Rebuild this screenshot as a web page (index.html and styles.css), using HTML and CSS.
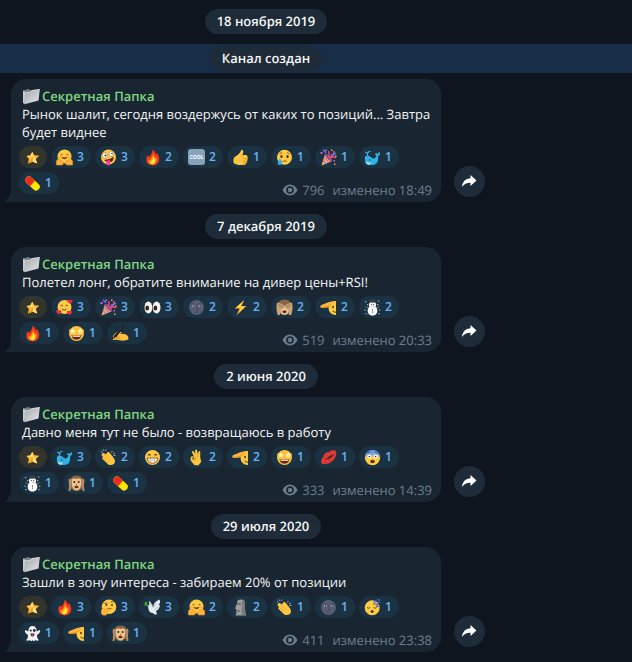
FILE: index.html
```html
<!DOCTYPE html>
<html lang="ru">
<head>
<meta charset="utf-8">
<meta name="viewport" content="width=device-width, initial-scale=1">
<title>Секретная Папка</title>
<link rel="stylesheet" href="styles.css">
</head>
<body>
<svg class="sprite" aria-hidden="true">
  <defs>
    <linearGradient id="g-folder" x1="0" y1="0" x2="1" y2="1"><stop offset="0" stop-color="#a2a6ab"/><stop offset="1" stop-color="#e6e8ea"/></linearGradient>
    <linearGradient id="g-fear" x1="0" y1="0" x2="0" y2="1"><stop offset="0" stop-color="#5a86e0"/><stop offset=".3" stop-color="#8aa9dc"/><stop offset=".55" stop-color="#ffcb45"/></linearGradient>
    <clipPath id="c-half"><path d="M0 0h16v17H0z"/></clipPath>
  </defs>
  <symbol id="folder" viewBox="0 0 18 17"><path d="M1 2.500L7 1l1 1.200L17.500 1v2L2 16z" fill="#7d8287"/><path d="M1 2.500V15l1.500 1L3.500 4z" fill="#c9ccd0"/><path d="M3 5l5-.7L9.500 2.800 17.800 1.500 16.500 12.500 2.500 16.300z" fill="url(#g-folder)"/><path d="M3 5l5-.7L9.500 2.800l8.300-1.300" fill="none" stroke="#f0f1f2" stroke-width=".7"/></symbol>
  <symbol id="star" viewBox="0 0 17 17"><path d="M8.300 2.800l2 3.500 5 .4-3.500 3.300 1.500 4.500-4.600-1.800L4 14.600l.9-4.600L2.400 7l3.900-.4z" fill="#ffbf35"/><path d="M8.300 2.800l.6 5.200-6.500-1 3.900-.4zM8.900 8l2.100 1.400 2.300 5.100-4.600-1.800z" fill="#ffdf8a"/><path d="M4 14.600L8.900 8l-.2 4.700z" fill="#f79a1d"/></symbol>
  <symbol id="hug" viewBox="0 0 17 17"><circle cx="8.500" cy="7.500" r="7" fill="#ffcb45"/><path d="M4.500 6q1-1.300 2 0M10.500 6q1-1.300 2 0" fill="none" stroke="#6a3b12" stroke-width="1"/><path d="M5.500 8.200q3 3.400 6 0" fill="#8a3d16" stroke="#6a3b12" stroke-width=".6"/><circle cx="3.500" cy="8.300" r="1" fill="#ff9c55"/><circle cx="13.500" cy="8.300" r="1" fill="#ff9c55"/><path d="M.5 16q-1-4 1-5.500Q3 9.500 4 11l3 1.500q1 1.500-.5 3.500zM16.500 16q1-4-1-5.500-1.500-1-2.500.5l-3 1.500q-1 1.500.5 3.500z" fill="#ffb13b" stroke="#e08723" stroke-width=".6"/></symbol>
  <symbol id="zany" viewBox="0 0 17 17"><circle cx="8.500" cy="8" r="7.500" fill="#ffcb45"/><circle cx="5" cy="6.500" r="2.700" fill="#fff" stroke="#8b5a24" stroke-width=".5"/><circle cx="11.500" cy="4.800" r="2.500" fill="#fff" stroke="#8b5a24" stroke-width=".5"/><circle cx="5.500" cy="6.500" r="1" fill="#3a2412"/><circle cx="12" cy="4.500" r=".8" fill="#3a2412"/><path d="M4 10.800q5 .5 9.500-3 .6 5-3.900 5.700-4 .3-5.600-2.700z" fill="#6b1f16"/><path d="M6 12l4-1q1 5.500-1.500 5.500-2.500 0-2.500-4.500z" fill="#f2459a"/></symbol>
  <symbol id="fire" viewBox="0 0 17 17"><path d="M8.500.5q3 2.500 3.500 5l1-1.500q3 4 2 8-1.200 4-6 4.500-6-.2-6.700-5-.2-3 1.700-5.500l1 2Q8.500 4.500 8.500.5z" fill="#f2381c"/><path d="M9 4q.5 3 2.500 5l1-1q1 7-4 7.500-4.500-.5-4-5l1.500.8Q9 8 9 4z" fill="#ff9a1a"/><path d="M9 8q3 3 2 5.500-1 2-3 1.800-2.300-.8-2-3.300l1.200.5Q9 11 9 8z" fill="#ffe53c"/></symbol>
  <symbol id="thumb" viewBox="0 0 17 17"><path d="M9.500.8q2 0 1.800 2.200L10.500 6H14q1.500.2 1.400 1.600.8 1 0 2.200.6 1.200-.3 2.200.3 1.400-.8 2-.3 2-2.300 2H6.500L2 14.500Q.500 11 2.500 8q3.500-1.500 5.500-4.500z" fill="#ffc540"/><path d="M15.400 9.800h-4M15 12.100h-4M14.300 14.200h-3.500M10.500 6L9.800 8" fill="none" stroke="#e58e20" stroke-width=".8"/></symbol>
  <symbol id="cry" viewBox="0 0 17 17"><circle cx="8.500" cy="8.300" r="7.500" fill="#ffcb45"/><ellipse cx="5.500" cy="7.500" rx="1.200" ry="1.600" fill="#55341a"/><ellipse cx="11.500" cy="7.500" rx="1.200" ry="1.600" fill="#55341a"/><path d="M3.500 5l2.500-1.500M13.500 5L11 3.500M6.500 12.500q2-1.500 4.200 0" fill="none" stroke="#7b4a1c" stroke-width=".9"/><path d="M4 9.500q3.500 5 .8 6.300Q2 16.800 1.700 14 1.800 12 4 9.500z" fill="#3fa7ee"/></symbol>
  <symbol id="party" viewBox="0 0 17 17"><path d="M5 5l7 7L1.500 16.500z" fill="#f7b844"/><path d="M4 8.500l5 5M3 11.500l3.200 3.500" stroke="#c06ddb" stroke-width="1.200"/><ellipse cx="8.500" cy="8.500" rx="1.800" ry="4.800" transform="rotate(-45 8.500 8.500)" fill="#a04a8c"/><path d="M8.500 8q1.500-3 0-6M10 8q4-1 4-6M10 9q3-2 6 0" fill="none" stroke="#f04a7c" stroke-width="1.500"/><path d="M6 4Q5 2 3 1M11 6q3 0 5-2" fill="none" stroke="#5580f5" stroke-width="1.500"/><path d="M.5 3h2v2h-2zM13.500 11H15v1.500h-1.500zM5.500.5h1.500V2H5.500z" fill="#d658dc"/><path d="M11 .5h1.500V2H11zM15 6.500h1.500V8H15zM14 14.500h1.500V16H14z" fill="#f5a927"/></symbol>
  <symbol id="whale" viewBox="0 0 17 17"><path d="M.8 9.500Q.8 6 4 6.500 6.500 7 8 9q3 1.500 4.500-2.500L10.500 5l2.300-1 .4 1.200L15.500 3q1.800 2-1.500 4.500.8 4.500-1.500 7-3 2-7 1.500Q.8 15 .8 9.500z" fill="#31b1e4"/><path d="M1 12.500q3 1.500 6 .8-.5 2.200-2.500 2.600Q1.800 15 1 12.500z" fill="#a5def0"/><circle cx="5.800" cy="11" r=".8" fill="#12394f"/><path d="M3.500 6.500Q4 3.500 1 3M3.500 6.500Q3.500 2 6.500 2.500" fill="none" stroke="#43b9ed" stroke-width="1.100"/></symbol>
  <symbol id="pill" viewBox="0 0 17 17"><g transform="rotate(42 8.500 8.500)"><rect x="0" y="4.800" width="17" height="7.400" rx="3.700" fill="#ffe600"/><path d="M8.500 4.800v7.400H3.700a3.700 3.700 0 010-7.400z" fill="#eb2f1d"/></g></symbol>
  <symbol id="love" viewBox="0 0 17 17"><circle cx="8.500" cy="8" r="7" fill="#ffcb45"/><path d="M4.500 7q1.200-1.800 2.400 0M9.500 7q1.200-1.800 2.400 0M6 10q2.300 2.200 4.600 0" fill="none" stroke="#70411a" stroke-width="1"/><path d="M14 4.800Q10.500 3 11.200 1.200 12.500-.2 14 1.500q1.700-1.500 2.700 0Q17 3.500 14 4.800zM3 15.500Q-.5 13.500.3 11.500q1.200-1.300 2.500.3Q4.500 10.500 5.500 12q.3 2-2.500 3.500zM13.500 16q-3-1.800-2.400-3.700 1.200-1.300 2.500.3 1.700-1.300 2.700.2.300 1.800-2.800 3.200z" fill="#f02b43"/></symbol>
  <symbol id="eyes" viewBox="0 0 17 17"><ellipse cx="4.400" cy="8.500" rx="3.900" ry="6" fill="#f6f5f2"/><ellipse cx="12.600" cy="8.500" rx="3.900" ry="6" fill="#f6f5f2"/><ellipse cx="3.200" cy="9" rx="1.900" ry="2.600" fill="#3b2519"/><ellipse cx="11.400" cy="9" rx="1.900" ry="2.600" fill="#3b2519"/></symbol>
  <symbol id="moon" viewBox="0 0 17 17"><circle cx="8.500" cy="8.500" r="7.400" fill="#565d75"/><path d="M9 5l.5 5-1.500.7 1.500.3" fill="none" stroke="#3c435a" stroke-width=".8"/><path d="M4 7h2.800M10.500 7h2.800" stroke="#b4b6c0" stroke-width="1.300"/><path d="M5.200 7h1M11.700 7h1" stroke="#23283a" stroke-width="1.300"/><path d="M3.500 5l3-.5M10.500 4.500l3 .5M6.500 13q2 .8 4 0" fill="none" stroke="#3c435a" stroke-width=".8"/></symbol>
  <symbol id="bolt" viewBox="0 0 17 17"><path d="M12.500.8L2.500 9.500h5L4.500 16.300 14.500 7H9.300z" fill="#ffa51e"/><path d="M11.500 2L4.500 8.700h4.700L6.500 14l6.300-6.200H8z" fill="#ffe04d"/></symbol>
  <symbol id="seeno" viewBox="0 0 17 17"><path d="M3 3q1-2.500 5.500-2.500T14 3q2.500 3 1.500 7-1.500 6-7 6.200Q3 16 1.500 10 .5 6 3 3z" fill="#876443"/><ellipse cx="8.500" cy="11.500" rx="4.500" ry="4.200" fill="#ecc38f"/><path d="M1 3.500q4 .3 7.300 3l-.8 3.200Q4.500 9 4 16H1.800Q-.5 10 1 3.500zM16 3.500q-4 .3-7.300 3l.8 3.200Q12.500 9 13 16h2.200Q17.500 10 16 3.500z" fill="#c9a478"/><path d="M2.500 5.500l5 2M2.500 7.300l4 1.300M14.500 5.500l-5 2M14.500 7.300l-4 1.300" stroke="#8c6a46" stroke-width=".6"/><ellipse cx="8.500" cy="12.700" rx="2" ry="1.200" fill="#4b2416"/></symbol>
  <symbol id="hearno" viewBox="0 0 17 17"><path d="M3 3q1-2.500 5.500-2.500T14 3l1.500 6q-1 7-7 7.200Q2.500 16 1.500 9z" fill="#876443"/><path d="M8.500 4q4.500-2 5 2 0 9-5 9.500-5-.5-5-9.500.5-4 5-2z" fill="#ecc38f"/><circle cx="6.300" cy="7" r="1" fill="#4b2416"/><circle cx="10.700" cy="7" r="1" fill="#4b2416"/><ellipse cx="8.500" cy="12" rx="2" ry="1.200" fill="#5e2b1b"/><path d="M8 9.500h1" stroke="#805739" stroke-width=".8"/><path d="M1 3.500l3 1-.5 6-1 5.500H.5Q1.500 9 .5 7zM16 3.500l-3 1 .5 6 1 5.500h2q-1-7 0-9z" fill="#b28b62"/></symbol>
  <symbol id="salute" viewBox="0 0 17 17"><g clip-path="url(#c-half)"><circle cx="15.500" cy="9" r="7" fill="#ffcb45"/><ellipse cx="13" cy="8" rx=".9" ry="1.300" fill="#5b3819"/><path d="M12.500 12q1.500 1.400 3.500 1.200" fill="none" stroke="#5b3819" stroke-width="1"/></g><path d="M.3 8Q0 6.600 1.500 6L9 3l5-1q2-.1 1.500 1.300L12.500 5l-2 2.500L8 8.500 2 9Q.7 9 .3 8z" fill="#ffb63a"/><path d="M1 8.500L8 7.500l2.500-1.800" fill="none" stroke="#dd8422" stroke-width=".7"/></symbol>
  <symbol id="snowman" viewBox="0 0 17 17"><circle cx="8.500" cy="11.800" r="4.900" fill="#fbfcff"/><circle cx="8.500" cy="5.800" r="3.600" fill="#f1f4f9"/><path d="M6 .5h5l.3 2.500H5.800z" fill="#3a3f4b"/><path d="M5 3.200h7" stroke="#3a3f4b" stroke-width=".9"/><path d="M4 9l-2.500-1.500M13 9l2.500-1.500" stroke="#a66f4b" stroke-width="1"/><circle cx="7.300" cy="5.500" r=".5" fill="#222"/><circle cx="9.700" cy="5.500" r=".5" fill="#222"/><path d="M8.500 6.500l2 .7-2 .5z" fill="#ff7d25"/><circle cx="8.500" cy="10.800" r=".6" fill="#222"/><circle cx="8.500" cy="13" r=".6" fill="#222"/><path d="M1 2h1.300v1.300H1zM3 5h1.300v1.300H3zM.5 10.500h1.300v1.300H.5zM14 1.500h1.300v1.300H14zM13 5h1.300v1.300H13zM15 10.500h1.300v1.300H15zM1.500 14h1.300v1.300H1.500zM14.300 14h1.300v1.300h-1.300z" fill="#6ebbe7"/></symbol>
  <symbol id="starry" viewBox="0 0 17 17"><circle cx="8.500" cy="8.500" r="7.500" fill="#ffc238"/><path d="M4.800 2l1.300 2.700 2.700.2-2 2 .6 2.800-2.600-1.400L2.200 9.700l.6-2.800-2-2 2.700-.2zM12.200 2l1.300 2.700 2.700.2-2 2 .6 2.800-2.600-1.400-2.600 1.400.6-2.800-2-2 2.700-.2z" fill="#fff09b" stroke="#e79a22" stroke-width=".4"/><path d="M3.500 10q5 1 10 0-.5 4.500-5 4.700-4.500-.2-5-4.700z" fill="#6b2716"/><path d="M4.300 10.400q4.200.8 8.400 0l-.4 1.300H4.700z" fill="#fff"/></symbol>
  <symbol id="writing" viewBox="0 0 17 17"><path d="M1 11.500q1-3.500 4.500-4.500l3-.5q1.500.3.8 1.500l-1.500 1Q13 8 16 11l.5 3.500Q13 16 9 15.500l-5-.8-3 .3q-1-1 .8-1.800z" fill="#ffbf3c"/><path d="M4 12.500l4-.8M4 14l4-.3" stroke="#dc8620" stroke-width=".8"/><path d="M10.500.5l2 1.300-7.800 9.700L1 14l1.500-4z" fill="#1a1e24"/><path d="M10 2L4 9.500" stroke="#4c5762" stroke-width=".6"/></symbol>
  <symbol id="clap" viewBox="0 0 17 17"><path d="M2 4.500q1-1.200 2.500 0l1.500 1 .8-1.800q1.500-1.300 3 .3l4 5q2 3 .5 5.500-2.500 2.500-6 1L2.500 10q-1-1.500.5-1.800L1.500 6z" fill="#ffc540"/><path d="M5 6l4.500 4.500M3.500 8.300l4.500 4.200" stroke="#eda02e" stroke-width=".7"/><path d="M1 2.700l1.500.5M3.200.5L4 2M5.800.5v1.300M11.500 3.500l.8-1.500M13 5l1.800-1M13.500 6.500h2" stroke="#b9bdc2" stroke-width=".9"/></symbol>
  <symbol id="grin" viewBox="0 0 17 17"><circle cx="8.500" cy="8.500" r="7.500" fill="#ffcb45"/><path d="M4 6.500q1.300-2.200 2.600 0M10.400 6.500q1.300-2.200 2.600 0" fill="none" stroke="#6a3b12" stroke-width="1.100"/><path d="M3.200 9h10.600q-.2 5-5.300 5.200Q3.400 14 3.200 9z" fill="#fff" stroke="#854b1c" stroke-width=".9"/><path d="M3.500 11.300h10M6.500 9v4.500M10.500 9v4.500" stroke="#b98d62" stroke-width=".5"/></symbol>
  <symbol id="ok" viewBox="0 0 17 17"><path d="M6 7.500L3.800 3q.3-1.500 1.700-.8L7.500 5 7 1.200Q8 0 9 1.300l1 4 .8-3q1.200-.8 1.500.5L12.200 8l1 5-3 3.500-4-.5-3.500-4.500Q1.800 8.500 3.500 7.300z" fill="#ffc540"/><ellipse cx="5.300" cy="9.600" rx="1.100" ry="1.300" fill="#8a5a22"/><path d="M7.300 7.500l.4 3-2 2M9.700 6v2" fill="none" stroke="#df8c22" stroke-width=".7"/></symbol>
  <symbol id="kiss" viewBox="0 0 17 17"><path d="M1.500 14.500Q.5 10 3.500 7.500 4.500 3 8.500 3.200 11.500 0 16 2q1 5.500-3 9.500-5 5-11.500 3z" fill="#e33a35"/><path d="M4 11l3.500-2 2-2L14 5q-1.200 3.500-4.500 4.500-2.500 1-5.500 1.500z" fill="#4a2430"/><path d="M6 5l1 2M10 3l.4 2M5 12.500l1 1.500M9 10.500l1.500 2M3.500 8l1.500 1" stroke="#9c2528" stroke-width=".6"/></symbol>
  <symbol id="fear" viewBox="0 0 17 17"><circle cx="8.500" cy="8.500" r="7.700" fill="url(#g-fear)"/><circle cx="5.400" cy="7.500" r="2" fill="#fff"/><circle cx="11.600" cy="7.500" r="2" fill="#fff"/><circle cx="5.400" cy="7.500" r=".8" fill="#3c2412"/><circle cx="11.600" cy="7.500" r=".8" fill="#3c2412"/><ellipse cx="8.500" cy="12.500" rx="2.300" ry="1.700" fill="#5d3015"/><path d="M3 4.500L6 3M14 4.500L11 3" stroke="#344e80" stroke-width=".9"/></symbol>
  <symbol id="think" viewBox="0 0 17 17"><circle cx="9" cy="7.800" r="7.300" fill="#ffcb45"/><circle cx="6.300" cy="6" r="1" fill="#5b3617"/><circle cx="12" cy="6" r="1" fill="#5b3617"/><path d="M4.500 4.500q1.500-1 3-.2M10.500 3q2-1 3.200.5M7 10q2.500-1 4.500-.2" fill="none" stroke="#74441b" stroke-width=".9"/><path d="M2.500 9q1.500-.5 1.500 1.500l5-.8q1.500.4.500 1.500l-2.500.8q2 2-.5 3.800-3 1.400-5-.8Q.5 12 2.500 9z" fill="#ffb83a" stroke="#e08e20" stroke-width=".5"/></symbol>
  <symbol id="dove" viewBox="0 0 17 17"><path d="M4 7Q5 5 7 6.500L9.500 8Q9 3 15.500.5q1.500 3-1 5.500l1.500.3q-.5 4-4 5.700L13 15q-2.500 1.500-4-1-4 0-4.500-4Z" fill="#e6ebee"/><path d="M5.500 7Q4.500 3.500 5.500 1.500L9 7z" fill="#cfd6db"/><path d="M9.500 8.500l3-4M10 11l4-3" fill="none" stroke="#a6afb7" stroke-width=".7"/><path d="M4.500 7.500L2 5.500 1 3M2 5.500L0 6M2.500 5.500L3 3" fill="none" stroke="#53a63c" stroke-width="1.200"/></symbol>
  <symbol id="moai" viewBox="0 0 17 17"><path d="M5.500 1.500Q8 0 12 1q1.500 4 .8 8l1 7.500H3.500l1-3L4 12l.8-1L3 9.500l1.800-4.500z" fill="#9b9d9a"/><path d="M9.500 2.500q1.700 4 0 8l.5 6h3.800l-1-7.500q.7-4-.8-8z" fill="#777b78"/><path d="M5 4.800h3.500L7.500 6M4.500 12H8" fill="none" stroke="#4b4f4f" stroke-width=".9"/></symbol>
  <symbol id="sleep" viewBox="0 0 17 17"><circle cx="8.200" cy="8.800" r="7.500" fill="#ffcb45"/><path d="M3 8.500q1.500 1.500 3 0M9.500 8.500q1.500 1.500 3 0" fill="none" stroke="#70411a" stroke-width="1"/><circle cx="8.200" cy="12.500" r="1.500" fill="#5e3114"/><path d="M9 2h3.500L9.300 5H13M13 .8h3l-2.500 2.500h3M12 5.500h2.500L12.300 7.500H15" fill="none" stroke="#4263d8" stroke-width="1"/></symbol>
  <symbol id="ghost" viewBox="0 0 17 17"><path d="M8.500 1q4 0 4.300 5.500L15.500 5q1.500 1-.5 3.500l-2 1.500q0 4 2 5-2 1.500-3.500 0-1.500 2-3 .3Q7 17 5.500 15 4 16.500 2 15q2-1 2-5L2 8.500Q0 6 1.500 5l2.700 1.500Q4.500 1 8.500 1z" fill="#f1f2f4"/><circle cx="6.700" cy="5.500" r="1.100" fill="#262a30"/><circle cx="10.300" cy="5.500" r="1.400" fill="#262a30"/><path d="M6.500 8.500h4q0 3-2 3t-2-3z" fill="#262a30"/><path d="M7.500 9.500h2v2h-2z" fill="#ed4c6b"/></symbol>
  <symbol id="eye" viewBox="0 0 16 12"><path d="M8 .5Q13 .7 15.500 6 13 11.300 8 11.500 3 11.300.5 6 3 .7 8 .5z" fill="#6d7f8f"/><circle cx="8" cy="6" r="3.800" fill="#192632"/><circle cx="8" cy="6" r="2.200" fill="#6d7f8f"/></symbol>
  <symbol id="share" viewBox="0 0 15 13"><path d="M8.500 0L14.500 5.500 8.500 11V7.800Q3.500 7.500 0 12 .5 4 8.500 3.200z" fill="#fff"/></symbol>
  <symbol id="tail" viewBox="0 0 6 12"><path d="M6 0v12H.5Q-.3 11.600.5 11 5.500 7 6 0z" fill="#192632"/></symbol>
</svg>

<main class="feed">
  <div class="service"><time class="chip" datetime="2019-11-18">18 ноября 2019</time></div>
  <div class="service service-event"><span class="chip">Канал создан</span></div>

  <article class="message">
    <div class="bubble">
      <h2 class="author"><svg class="folder"><use href="#folder"/></svg>Секретная Папка</h2>
      <p class="text">Рынок шалит, сегодня воздержусь от каких то позиций... Завтра будет виднее</p>
      <div class="bottom">
        <div class="reactions">
          <button class="reaction paid" aria-label="Звезда"><svg><use href="#star"/></svg></button>
          <button class="reaction"><svg><use href="#hug"/></svg>3</button>
          <button class="reaction"><svg><use href="#zany"/></svg>3</button>
          <button class="reaction"><svg><use href="#fire"/></svg>2</button>
          <button class="reaction"><span class="cool">COOL</span>2</button>
          <button class="reaction"><svg><use href="#thumb"/></svg>1</button>
          <button class="reaction"><svg><use href="#cry"/></svg>1</button>
          <button class="reaction"><svg><use href="#party"/></svg>1</button>
          <button class="reaction"><svg><use href="#whale"/></svg>1</button>
          <button class="reaction"><svg><use href="#pill"/></svg>1</button>
        </div>
        <footer class="meta"><svg class="eye"><use href="#eye"/></svg><span>796</span><span class="edited">изменено 18:49</span></footer>
      </div>
      <svg class="tail"><use href="#tail"/></svg>
    </div>
    <button class="share" aria-label="Переслать"><svg><use href="#share"/></svg></button>
  </article>

  <div class="service"><time class="chip" datetime="2019-12-07">7 декабря 2019</time></div>

  <article class="message">
    <div class="bubble">
      <h2 class="author"><svg class="folder"><use href="#folder"/></svg>Секретная Папка</h2>
      <p class="text">Полетел лонг, обратите внимание на дивер цены+RSI!</p>
      <div class="bottom">
        <div class="reactions">
          <button class="reaction paid" aria-label="Звезда"><svg><use href="#star"/></svg></button>
          <button class="reaction"><svg><use href="#love"/></svg>3</button>
          <button class="reaction"><svg><use href="#party"/></svg>3</button>
          <button class="reaction"><svg><use href="#eyes"/></svg>3</button>
          <button class="reaction"><svg><use href="#moon"/></svg>2</button>
          <button class="reaction"><svg><use href="#bolt"/></svg>2</button>
          <button class="reaction"><svg><use href="#seeno"/></svg>2</button>
          <button class="reaction"><svg><use href="#salute"/></svg>2</button>
          <button class="reaction"><svg><use href="#snowman"/></svg>2</button>
          <button class="reaction"><svg><use href="#fire"/></svg>1</button>
          <button class="reaction"><svg><use href="#starry"/></svg>1</button>
          <button class="reaction"><svg><use href="#writing"/></svg>1</button>
        </div>
        <footer class="meta"><svg class="eye"><use href="#eye"/></svg><span>519</span><span class="edited">изменено 20:33</span></footer>
      </div>
      <svg class="tail"><use href="#tail"/></svg>
    </div>
    <button class="share" aria-label="Переслать"><svg><use href="#share"/></svg></button>
  </article>

  <div class="service"><time class="chip" datetime="2020-06-02">2 июня 2020</time></div>

  <article class="message">
    <div class="bubble">
      <h2 class="author"><svg class="folder"><use href="#folder"/></svg>Секретная Папка</h2>
      <p class="text">Давно меня тут не было - возвращаюсь в работу</p>
      <div class="bottom">
        <div class="reactions">
          <button class="reaction paid" aria-label="Звезда"><svg><use href="#star"/></svg></button>
          <button class="reaction"><svg><use href="#whale"/></svg>3</button>
          <button class="reaction"><svg><use href="#clap"/></svg>2</button>
          <button class="reaction"><svg><use href="#grin"/></svg>2</button>
          <button class="reaction"><svg><use href="#ok"/></svg>2</button>
          <button class="reaction"><svg><use href="#salute"/></svg>2</button>
          <button class="reaction"><svg><use href="#starry"/></svg>1</button>
          <button class="reaction"><svg><use href="#kiss"/></svg>1</button>
          <button class="reaction"><svg><use href="#fear"/></svg>1</button>
          <button class="reaction"><svg><use href="#snowman"/></svg>1</button>
          <button class="reaction"><svg><use href="#hearno"/></svg>1</button>
          <button class="reaction"><svg><use href="#pill"/></svg>1</button>
        </div>
        <footer class="meta"><svg class="eye"><use href="#eye"/></svg><span>333</span><span class="edited">изменено 14:39</span></footer>
      </div>
      <svg class="tail"><use href="#tail"/></svg>
    </div>
    <button class="share" aria-label="Переслать"><svg><use href="#share"/></svg></button>
  </article>

  <div class="service"><time class="chip" datetime="2020-07-29">29 июля 2020</time></div>

  <article class="message">
    <div class="bubble">
      <h2 class="author"><svg class="folder"><use href="#folder"/></svg>Секретная Папка</h2>
      <p class="text">Зашли в зону интереса - забираем 20% от позиции</p>
      <div class="bottom">
        <div class="reactions">
          <button class="reaction paid" aria-label="Звезда"><svg><use href="#star"/></svg></button>
          <button class="reaction"><svg><use href="#fire"/></svg>3</button>
          <button class="reaction"><svg><use href="#think"/></svg>3</button>
          <button class="reaction"><svg><use href="#dove"/></svg>3</button>
          <button class="reaction"><svg><use href="#hug"/></svg>2</button>
          <button class="reaction"><svg><use href="#moai"/></svg>2</button>
          <button class="reaction"><svg><use href="#clap"/></svg>1</button>
          <button class="reaction"><svg><use href="#moon"/></svg>1</button>
          <button class="reaction"><svg><use href="#sleep"/></svg>1</button>
          <button class="reaction"><svg><use href="#ghost"/></svg>1</button>
          <button class="reaction"><svg><use href="#salute"/></svg>1</button>
          <button class="reaction"><svg><use href="#hearno"/></svg>1</button>
        </div>
        <footer class="meta"><svg class="eye"><use href="#eye"/></svg><span>411</span><span class="edited">изменено 23:38</span></footer>
      </div>
      <svg class="tail"><use href="#tail"/></svg>
    </div>
    <button class="share" aria-label="Переслать"><svg><use href="#share"/></svg></button>
  </article>
</main>
</body>
</html>
```

FILE: styles.css
```css
* {
  box-sizing: border-box;
}

body {
  margin: 0;
  background: #0e151f;
  color: #f5f5f5;
  font: 13px/18px "Open Sans", "Noto Sans", sans-serif;
  text-rendering: geometricPrecision;
}

button {
  border: 0;
  font: inherit;
  cursor: pointer;
}

.sprite {
  position: absolute;
  width: 0;
  height: 0;
}

.feed {
  padding: 9px 0 10px;
}

/* Date and event labels, centred on the message column */
.service {
  display: flex;
  justify-content: center;
  padding-right: 100px;
}

.service-event {
  margin: 10px 0 6px;
  padding-top: 2px;
  padding-bottom: 2px;
  background: #182d47;
}

.chip {
  padding: 3px 12px 4px;
  border-radius: 13px;
  background: #1e2b38;
  font-weight: 600;
}

.message {
  display: flex;
  align-items: flex-end;
  gap: 13px;
  padding-left: 11px;
}

.message + .service {
  margin: 12px 0 8px;
}

.bubble {
  position: relative;
  flex: 0 1 430px;
  padding: 8px 4px 3px 8px;
  border-radius: 15px 15px 15px 0;
  background: #192632;
}

.tail {
  position: absolute;
  right: 100%;
  bottom: 0;
  width: 6px;
  height: 12px;
}

.author {
  display: flex;
  align-items: center;
  gap: 2px;
  margin: 0 3px;
  color: #7fd67f;
  font-size: 13px;
  font-weight: 600;
}

.folder {
  width: 18px;
  height: 17px;
}

.text {
  margin: 0 0 5px 3px;
}

/* Views and time share the last line of the reactions */
.bottom {
  display: grid;
}

.reactions,
.meta {
  grid-area: 1 / 1;
}

.reactions {
  display: flex;
  flex-wrap: wrap;
  align-content: flex-start;
  gap: 4px;
  padding-right: 36px;
  padding-bottom: 5px;
}

.reaction {
  display: flex;
  align-items: center;
  gap: 4px;
  width: 40px;
  height: 22px;
  padding: 0 0 0 5px;
  border-radius: 11px;
  background: #1b3243;
  color: #6ab3f3;
  font-size: 12px;
  font-weight: 600;
}

.reaction svg {
  flex: none;
  width: 17px;
  height: 17px;
}

.paid {
  width: 28px;
  background: #33342b;
}

.cool {
  flex: none;
  width: 17px;
  border-radius: 3px;
  background: #86a3bb;
  color: #fff;
  font-size: 5px;
  font-weight: 700;
  line-height: 16px;
  text-align: center;
}

.meta {
  display: flex;
  align-items: center;
  align-self: end;
  justify-self: end;
  gap: 4px;
  padding-right: 5px;
  color: #6d7f8f;
}

.eye {
  width: 16px;
  height: 12px;
}

.edited {
  margin-left: 4px;
}

.share {
  display: grid;
  place-items: center;
  width: 31px;
  height: 31px;
  margin-bottom: 5px;
  padding: 0;
  border-radius: 50%;
  background: #1e2b38;
}

.share svg {
  width: 15px;
  height: 13px;
}
```
